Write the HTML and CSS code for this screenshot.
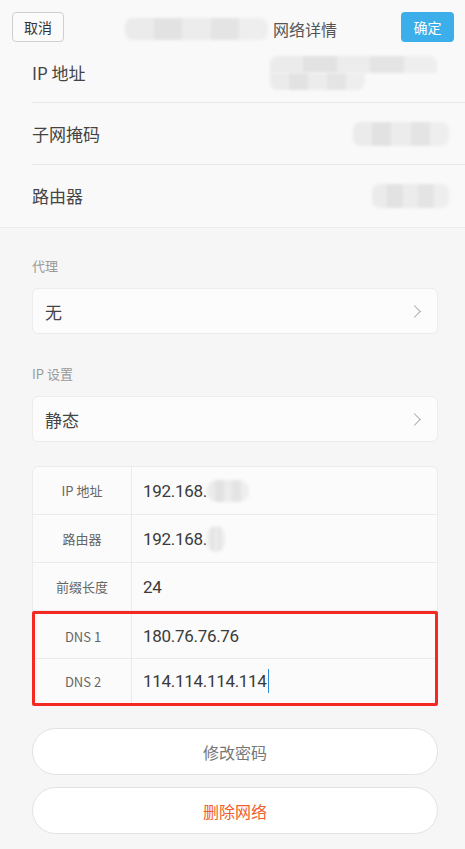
FILE: index.html
```html
<html>
<head>
<meta charset="UTF-8">
<link rel="stylesheet" href="styles.css">
<title>网络详情</title>
</head>
<body>
	<div class="top">
		<div class="bar">
			<div class="btn cancel">取消</div>
			<div class="title">
				<span class="mosaic title_mosaic"></span>
				<span>网络详情</span>
			</div>
			<div class="btn ok">确定</div>
		</div>
		<div class="info">
			<div class="info_row">
				<span>IP 地址</span>
				<span class="ip_mosaic">
					<span class="mosaic ip_line1"></span>
					<span class="mosaic ip_line2"></span>
				</span>
			</div>
			<div class="info_row">
				<span>子网掩码</span>
				<span class="mosaic mask_mosaic"></span>
			</div>
			<div class="info_row last">
				<span>路由器</span>
				<span class="mosaic gw_mosaic"></span>
			</div>
		</div>
	</div>

	<div class="content">
		<div class="caption">代理</div>
		<div class="select">
			<span>无</span>
			<span class="chevron"></span>
		</div>

		<div class="caption">IP 设置</div>
		<div class="select">
			<span>静态</span>
			<span class="chevron"></span>
		</div>

		<div class="table">
			<div class="trow">
				<div class="tlabel">IP 地址</div>
				<div class="tvalue">192.168.<span class="mosaic val_mosaic"></span></div>
			</div>
			<div class="trow">
				<div class="tlabel">路由器</div>
				<div class="tvalue">192.168.<span class="mosaic val_mosaic short"></span></div>
			</div>
			<div class="trow">
				<div class="tlabel">前缀长度</div>
				<div class="tvalue">24</div>
			</div>
			<div class="dns">
				<div class="trow">
					<div class="tlabel">DNS 1</div>
					<div class="tvalue">180.76.76.76</div>
				</div>
				<div class="trow">
					<div class="tlabel">DNS 2</div>
					<div class="tvalue">114.114.114.114<span class="caret"></span></div>
				</div>
			</div>
		</div>

		<div class="pill">修改密码</div>
		<div class="pill danger">删除网络</div>
	</div>
</body>
</html>
```

FILE: styles.css
```css
body{
	margin: 0;
	width: 465px;
	height: 849px;
	overflow: hidden;
	background: #f6f6f6;
	font-family: "Noto Sans CJK SC", "Noto Sans", sans-serif;
	color: #444;
}
.top{
	background: #f9f9f9;
	border-bottom: 1px solid #ebebeb;
	height: 227px;
}
.bar{
	display: flex;
	align-items: center;
	padding: 12px 11px 0 12px;
	height: 30px;
}
.btn{
	width: 52px;
	height: 30px;
	flex-shrink: 0;
	box-sizing: border-box;
	border-radius: 4px;
	display: flex;
	align-items: center;
	justify-content: center;
	font-size: 14px;
}
.cancel{
	border: 1px solid #cfcfcf;
	background: #fbfbfb;
	color: #333;
}
.ok{
	width: 53px;
	margin-left: auto;
	background: #3caeea;
	color: #fff;
}
.title{
	display: flex;
	align-items: center;
	flex-shrink: 0;
	white-space: nowrap;
	font-size: 16px;
	color: #555;
	margin-left: 61px;
	margin-top: 3px;
}
.mosaic{
	display: inline-block;
	background:
		linear-gradient(90deg, #ebebeb 0 20%, #e2e2e2 20% 40%, #ececec 40% 60%, #e4e4e4 60% 80%, #eeeeee 80%);
	filter: blur(1.5px);
	border-radius: 8px;
}
.title_mosaic{
	width: 143px;
	height: 22px;
	margin-right: 5px;
}
.info{
	padding-left: 32px;
}
.info_row{
	height: 61px;
	display: flex;
	align-items: center;
	justify-content: space-between;
	border-bottom: 1px solid #e8e8e8;
	font-size: 17px;
	color: #444;
	padding-right: 16px;
}
.info_row:first-child{
	height: 60px;
}
.info_row.last{
	border-bottom: none;
}
.ip_mosaic{
	display: flex;
	flex-direction: column;
	width: 167px;
	margin-right: 12px;
	margin-top: 2px;
}
.ip_line1{
	width: 167px;
	height: 17px;
	border-radius: 8px 8px 0 0;
}
.ip_line2{
	width: 95px;
	height: 17px;
	border-radius: 0 0 8px 8px;
}
.mask_mosaic{
	width: 96px;
	height: 24px;
}
.gw_mosaic{
	width: 77px;
	height: 24px;
}
.content{
	padding: 0 27px 0 32px;
}
.caption{
	font-size: 13px;
	color: #999;
	padding-top: 30px;
	height: 32px;
}
.content .caption:nth-of-type(1){
	padding-top: 28px;
}
.select{
	height: 46px;
	box-sizing: border-box;
	background: #fcfcfc;
	border: 1px solid #ececec;
	border-radius: 6px;
	display: flex;
	align-items: center;
	justify-content: space-between;
	padding: 0 18px 0 12px;
	font-size: 17px;
	color: #444;
}
.chevron{
	width: 8px;
	height: 8px;
	border-top: 1px solid #aaa;
	border-right: 1px solid #aaa;
	transform: rotate(45deg);
}
.table{
	margin-top: 24px;
	background: #fbfbfb;
	border: 1px solid #ececec;
	border-radius: 6px;
}
.trow{
	display: flex;
	box-sizing: border-box;
	height: 48px;
	border-bottom: 1px solid #ebebeb;
}
.trow:last-child{
	border-bottom: none;
}
.tlabel{
	width: 98px;
	border-right: 1px solid #ebebeb;
	display: flex;
	align-items: center;
	justify-content: center;
	font-size: 13px;
	color: #666;
}
.tvalue{
	display: flex;
	align-items: center;
	padding-left: 11px;
	font-family: Roboto, "Noto Sans CJK SC", sans-serif;
	font-size: 17px;
	letter-spacing: -0.3px;
	color: #3a3a3a;
}
.val_mosaic{
	width: 42px;
	height: 22px;
	border-radius: 10px;
}
.val_mosaic.short{
	width: 18px;
	height: 26px;
}
.dns{
	margin: 0 -1px -1px -1px;
	border: 3px solid #f42a22;
	border-radius: 2px;
}
.dns .trow{
	height: 45px;
}
.dns .trow:last-child{
	height: 44px;
}
.dns .tlabel{
	width: 96px;
}
.caret{
	display: inline-block;
	width: 1px;
	height: 24px;
	background: #2a8ad4;
	margin-left: 1px;
}
.pill{
	height: 47px;
	box-sizing: border-box;
	margin-top: 22px;
	background: #fff;
	border: 1px solid #e2e2e2;
	border-radius: 24px;
	display: flex;
	align-items: center;
	justify-content: center;
	font-size: 16px;
	color: #777;
}
.pill.danger{
	margin-top: 12px;
	color: #f0602a;
}
```
